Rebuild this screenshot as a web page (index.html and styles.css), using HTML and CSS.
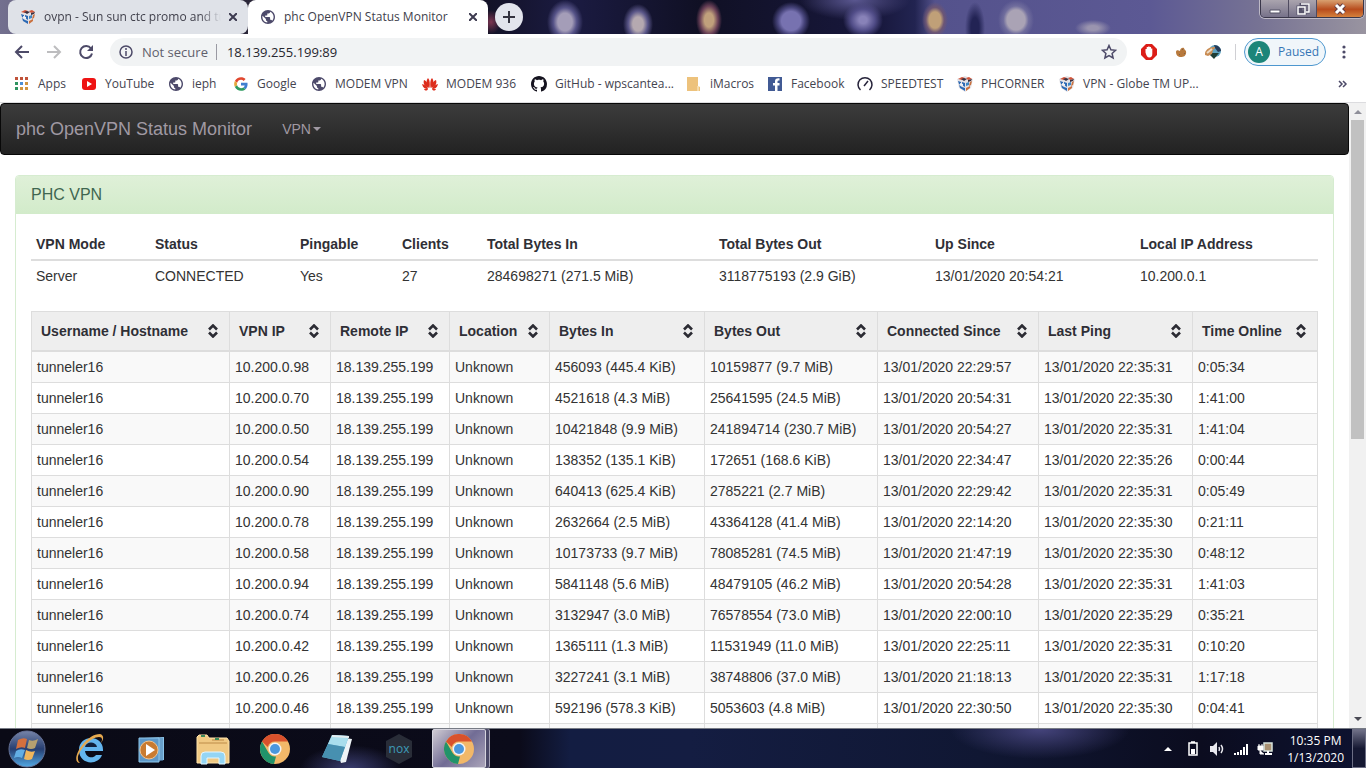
FILE: index.html
```html
<!DOCTYPE html>
<html lang="en">
<head>
<meta charset="utf-8">
<title>phc OpenVPN Status Monitor</title>
<link rel="stylesheet" href="styles.css">
</head>
<body>
<svg class="defs" aria-hidden="true">
  <symbol id="globe" viewBox="2 2 20 20"><path fill="#4d4a6b" d="M12 2C6.480 2 2 6.480 2 12s4.480 10 10 10 10-4.480 10-10S17.520 2 12 2zm-1 17.930c-3.950-.490-7-3.850-7-7.930 0-.620.080-1.210.210-1.790L9 15v1c0 1.100.900 2 2 2v1.930zm6.900-2.540c-.260-.810-1-1.390-1.900-1.390h-1v-3c0-.550-.450-1-1-1H8v-2h2c.550 0 1-.450 1-1V7h2c1.100 0 2-.900 2-2v-.410c2.930 1.190 5 4.060 5 7.410 0 2.080-.800 3.970-2.100 5.390z"/></symbol>
  <symbol id="cube" viewBox="0 0 16 16">
    <path fill="#e4e2e6" d="M8 0l8 3-2 9-6 4-6-4L0 3z"/>
    <path fill="#d4563a" d="M1 3l4-2 3 1-3 2zM9 2l3-1 3 2-4 1z"/><path fill="#3a3040" d="M4 3l3-1 3 1-3 2zM11 4l4-1-1 2-3 1z"/>
    <path fill="#2b69b4" d="M1 5l3 1v3L2 8zM5 6l3 1v4L5 9zM2 9l3 2 3 1v3l-5-3z"/>
    <path fill="#f0f1f5" d="M3 7l3 1v2L3 9z"/>
    <path fill="#3f86c4" d="M9 7l3-1v3l-3 1z"/><path fill="#c9713f" d="M13 6l2-1-1 4-2 1zM9 12l4-2v2l-4 3z"/>
  </symbol>
  <symbol id="cross" viewBox="0 0 8 8"><path d="M0 0l8 8M8 0L0 8" stroke="#3d3b50" stroke-width="2"/></symbol>
  <symbol id="chrome" viewBox="0 0 30 30">
    <circle cx="15" cy="15" r="15" fill="#f2b869"/>
    <path fill="#d9512c" d="M2 7.500A15 15 0 0 1 28 7.500H15a7.500 7.500 0 0 0-7.200 5.500z"/>
    <path fill="#21936a" d="M2 7.500l6.500 11.300A7.500 7.500 0 0 0 16 22.400L14 30A15 15 0 0 1 2 7.500z"/>
    <circle cx="15" cy="15" r="6.500" fill="#f3f3f3"/><circle cx="15" cy="15" r="5" fill="#4a97dd"/>
  </symbol>
  <symbol id="sort" viewBox="0 0 10 14"><path d="M1 5.500l4-4 4 4M1 8.500l4 4 4-4" fill="none" stroke="#2b2b33" stroke-width="2.600"/></symbol>
</svg>

<header class="browser">
  <div class="tabstrip">
    <div class="tab">
      <svg class="icon"><use href="#cube"/></svg>
      <button class="tab-title fade">ovpn - Sun sun ctc promo and tunneling</button>
      <button class="tab-close" aria-label="Close tab"><svg><use href="#cross"/></svg></button>
    </div>
    <div class="tab active">
      <svg class="icon small"><use href="#globe"/></svg>
      <button class="tab-title">phc OpenVPN Status Monitor</button>
      <button class="tab-close" aria-label="Close tab"><svg><use href="#cross"/></svg></button>
    </div>
    <button class="new-tab" aria-label="New tab"><svg viewBox="0 0 12 12"><path d="M6 0v12M0 6h12" stroke="#33323f" stroke-width="2"/></svg></button>
    <div class="window-controls">
      <button aria-label="Minimize"><svg viewBox="0 0 14 12"><path d="M2 7h10v3H2z" fill="#fff" stroke="#555267"/></svg></button>
      <button aria-label="Restore"><svg viewBox="0 0 14 12"><path d="M5 1h8v8H5zM2 4h7v7H2z" fill="none" stroke="#55526a" stroke-width="3"/><path d="M5 1h8v8h-3M2 4h7v7H2z" fill="none" stroke="#fff" stroke-width="1.500"/></svg></button>
      <button class="close" aria-label="Close"><svg viewBox="0 0 14 12"><path d="M3 2l8 8M11 2l-8 8" stroke="#5d3941" stroke-width="5"/><path d="M3 2l8 8M11 2l-8 8" stroke="#fff" stroke-width="3"/></svg></button>
    </div>
  </div>

  <div class="toolbar">
    <button class="nav-btn" aria-label="Back"><svg viewBox="0 0 16 16"><path d="M15 8H2M8 2L2 8l6 6" fill="none" stroke="#4d4a68" stroke-width="2"/></svg></button>
    <button class="nav-btn" aria-label="Forward"><svg viewBox="0 0 16 16"><path d="M1 8h13M8 2l6 6-6 6" fill="none" stroke="#bdbdbf" stroke-width="2"/></svg></button>
    <button class="nav-btn" aria-label="Reload"><svg viewBox="0 0 16 16"><path d="M13 4.500A6 6 0 1 0 14 9.500" fill="none" stroke="#4d4a68" stroke-width="2"/><path d="M15 1v6H9z" fill="#4d4a68"/></svg></button>
    <div class="omnibox">
      <svg class="info" viewBox="0 0 14 14"><circle cx="7" cy="7" r="6" fill="none" stroke="#4d4a68" stroke-width="1.500"/><path d="M7 6v5M7 3v2" stroke="#4d4a68" stroke-width="1.500"/></svg>
      <label class="insecure" for="url">Not secure</label>
      <input id="url" type="text" value="18.139.255.199:89">
      <button class="star" aria-label="Bookmark"><svg viewBox="0 0 16 16"><path d="M8 1.500l1.900 4.300 4.700.500-3.500 3.100 1 4.600L8 11.600 3.900 14l1-4.600L1.400 6.300l4.700-.500z" fill="none" stroke="#4d4a68" stroke-width="1.500"/></svg></button>
    </div>
    <div class="extensions">
      <button aria-label="Blocker"><svg class="icon" viewBox="0 0 16 16"><path d="M5 0h6l5 5v6l-5 5H5l-5-5V5z" fill="#dc1e18"/><path d="M4.500 8.500V5h1.200V3h1.400V2.500h1.500V3H10v1.500h1.300V10c0 2-1 3.500-3 3.500-2 0-2.800-1.500-3.800-5z" fill="#fff"/></svg></button>
      <button aria-label="Cookies"><svg class="icon" viewBox="0 0 16 16"><path d="M3 8c0-2 2-2 4-1 0-2 2-4 4-3 0 1 1 2 2 3 1 5-3 6-5 6-3 0-5-2-5-5z" fill="#b8793c"/><path d="M9 5l1 1M11 9l1 1M6 10l1 1" stroke="#7a604b"/></svg></button>
      <button aria-label="Downloader"><svg class="icon" viewBox="0 0 16 16"><circle cx="10" cy="7" r="6" fill="#5fa3c0"/><path d="M9 1c4 0 7 3 7 6l-3 1-3-4z" fill="#263b59"/><path d="M6 9h8l-5 6-4-4z" fill="#1f3d34"/><path d="M0 9c1-4 5-6 9-6 2 0 1 2-1 3l-1 4-4 2-3-1z" fill="#c98d55"/><path d="M2 9l5-4" stroke="#eddcc6" stroke-width="2"/></svg></button>
    </div>
    <button class="profile"><span class="avatar">A</span>Paused</button>
    <button class="menu" aria-label="Menu"><svg viewBox="0 0 4 14"><g fill="#4d4a68"><circle cx="2" cy="2" r="1.600"/><circle cx="2" cy="7" r="1.600"/><circle cx="2" cy="12" r="1.600"/></g></svg></button>
  </div>

  <nav class="bookmarks" aria-label="Bookmarks">
    <a href="#"><svg class="icon" viewBox="0 0 16 16"><path d="M1 1h3v3H1zM6 1h3v3H6zM11 1h3v3h-3z" fill="#c0533a"/><path d="M1 6h3v3H1zM1 11h3v3H1z" fill="#2f9360"/><path d="M6 6h3v3H6z" fill="#4a8fd6"/><path d="M11 6h3v3h-3zM6 11h3v3H6zM11 11h3v3h-3z" fill="#cf9440"/></svg>Apps</a>
    <a href="#"><svg class="icon" viewBox="0 0 16 16"><rect x="1" y="2" width="14" height="12" rx="3" fill="#ee1313"/><path d="M6 5l5 3-5 3z" fill="#fff"/></svg>YouTube</a>
    <a href="#"><svg class="icon small"><use href="#globe"/></svg>ieph</a>
    <a href="#"><svg class="icon" viewBox="-4 -4 56 56"><path fill="#e1482f" d="M24 9.500c3.540 0 6.710 1.220 9.210 3.600l6.850-6.850C35.900 2.380 30.470 0 24 0 14.620 0 6.510 5.380 2.560 13.220l7.980 6.190C12.430 13.720 17.740 9.500 24 9.500z"/><path fill="#3f7fd0" d="M46.980 24.550c0-1.570-.15-3.090-.38-4.550H24v9.020h12.940c-.58 2.960-2.260 5.480-4.780 7.180l7.730 6c4.510-4.180 7.090-10.360 7.090-17.650z"/><path fill="#e5a73d" d="M10.530 28.590A14.500 14.500 0 0 1 9.770 24c0-1.600.27-3.140.76-4.590l-7.980-6.190A23.900 23.900 0 0 0 0 24c0 3.880.92 7.540 2.560 10.780l7.970-6.190z"/><path fill="#2e9a60" d="M24 48c6.480 0 11.930-2.130 15.890-5.810l-7.730-6c-2.150 1.450-4.920 2.300-8.160 2.300-6.260 0-11.570-4.220-13.470-9.910l-7.980 6.190C6.510 42.620 14.620 48 24 48z"/></svg>Google</a>
    <a href="#"><svg class="icon small"><use href="#globe"/></svg>MODEM VPN</a>
    <a href="#"><svg class="icon" viewBox="0 0 16 16"><g fill="#dd2c1b"><path d="M7.500 12C4 9 4 4 6 2c2 2 2 6 1.500 10z"/><path d="M8.500 12C12 9 12 4 10 2c-2 2-2 6-1.500 10z"/><path d="M6.500 12C2 10 1 7 2 4c3 1 5 5 4.500 8z"/><path d="M9.500 12C14 10 15 7 14 4c-3 1-5 5-4.500 8z"/><path d="M6 13c-3 0-5-1-6-5 3 1 5 2 6 5zM10 13c3 0 5-1 6-5-3 1-5 2-6 5zM6 13H2c1 2 3 2 4 0zM10 13h4c-1 2-3 2-4 0z"/></g></svg>MODEM 936</a>
    <a href="#"><svg class="icon" viewBox="0 0 16 16"><path fill="#15131f" d="M8 0C3.580 0 0 3.580 0 8c0 3.540 2.290 6.530 5.470 7.590.4.070.55-.17.55-.38 0-.19-.01-.82-.01-1.490-2.010.37-2.530-.49-2.690-.94-.09-.23-.48-.94-.82-1.130-.28-.15-.68-.52-.01-.53.63-.01 1.080.58 1.230.82.72 1.210 1.870.87 2.330.66.07-.52.28-.87.51-1.070-1.780-.2-3.640-.89-3.640-3.950 0-.87.31-1.590.82-2.150-.08-.2-.36-1.020.08-2.120 0 0 .67-.21 2.200.82.64-.18 1.320-.27 2-.27s1.360.09 2 .27c1.530-1.040 2.200-.82 2.200-.82.44 1.100.16 1.920.08 2.120.51.56.82 1.270.82 2.150 0 3.070-1.870 3.750-3.650 3.950.29.25.54.73.54 1.480 0 1.070-.01 1.930-.01 2.200 0 .21.15.46.55.38A8.010 8.010 0 0 0 16 8c0-4.420-3.580-8-8-8z"/></svg>GitHub - wpscantea...</a>
    <a href="#"><svg class="icon" viewBox="0 0 16 16"><path d="M1 1h11v9l2 1v4H1z" fill="#edc27c"/><path d="M12 10v5" stroke="#fff3d6"/></svg>iMacros</a>
    <a href="#"><svg class="icon" viewBox="0 0 16 16"><rect x="1" y="1" width="14" height="14" fill="#415a94"/><path d="M10.500 15V9.500h2V7h-2V5.500c0-1 .5-1 2-1V2.300c-3-.3-4.500.7-4.500 3V7H6v2.500h2V15z" fill="#fff"/></svg>Facebook</a>
    <a href="#"><svg class="icon" viewBox="0 0 16 16"><path d="M3.500 14a7 7 0 1 1 9 0" fill="none" stroke="#26233a" stroke-width="1.500"/><path d="M7 10l4-5" stroke="#26233a" stroke-width="1.500"/></svg>SPEEDTEST</a>
    <a href="#"><svg class="icon"><use href="#cube"/></svg>PHCORNER</a>
    <a href="#"><svg class="icon"><use href="#cube"/></svg>VPN - Globe TM UP...</a>
    <button class="more" aria-label="More bookmarks"><svg viewBox="0 0 10 8"><path d="M1 1l3 3-3 3M5 1l3 3-3 3" fill="none" stroke="#4d4a68" stroke-width="1.500"/></svg></button>
  </nav>
</header>

<div class="viewport">
  <main class="page">
    <nav class="navbar">
      <a class="brand" href="#">phc OpenVPN Status Monitor</a>
      <button class="dropdown">VPN<span class="caret"></span></button>
    </nav>
    <section class="panel">
      <h3 class="panel-heading">PHC VPN</h3>
      <div class="panel-body">
        <table class="summary">
          <colgroup><col class="s-mode"><col class="s-status"><col class="s-ping"><col class="s-clients"><col class="s-in"><col class="s-out"><col class="s-since"><col class="s-local"></colgroup>
          <thead><tr><th>VPN Mode</th><th>Status</th><th>Pingable</th><th>Clients</th><th>Total Bytes In</th><th>Total Bytes Out</th><th>Up Since</th><th>Local IP Address</th></tr></thead>
          <tbody><tr><td>Server</td><td>CONNECTED</td><td>Yes</td><td>27</td><td>284698271 (271.5 MiB)</td><td>3118775193 (2.9 GiB)</td><td>13/01/2020 20:54:21</td><td>10.200.0.1</td></tr></tbody>
        </table>
        <table class="clients">
          <colgroup><col class="c-user"><col class="c-vpn"><col class="c-remote"><col class="c-loc"><col class="c-in"><col class="c-out"><col class="c-since"><col class="c-ping"><col class="c-online"></colgroup>
          <thead><tr>
            <th><button>Username / Hostname<svg><use href="#sort"/></svg></button></th>
            <th><button>VPN IP<svg><use href="#sort"/></svg></button></th>
            <th><button>Remote IP<svg><use href="#sort"/></svg></button></th>
            <th><button>Location<svg><use href="#sort"/></svg></button></th>
            <th><button>Bytes In<svg><use href="#sort"/></svg></button></th>
            <th><button>Bytes Out<svg><use href="#sort"/></svg></button></th>
            <th><button>Connected Since<svg><use href="#sort"/></svg></button></th>
            <th><button>Last Ping<svg><use href="#sort"/></svg></button></th>
            <th><button>Time Online<svg><use href="#sort"/></svg></button></th>
          </tr></thead>
          <tbody>
            <tr><td>tunneler16</td><td>10.200.0.98</td><td>18.139.255.199</td><td>Unknown</td><td>456093 (445.4 KiB)</td><td>10159877 (9.7 MiB)</td><td>13/01/2020 22:29:57</td><td>13/01/2020 22:35:31</td><td>0:05:34</td></tr>
            <tr><td>tunneler16</td><td>10.200.0.70</td><td>18.139.255.199</td><td>Unknown</td><td>4521618 (4.3 MiB)</td><td>25641595 (24.5 MiB)</td><td>13/01/2020 20:54:31</td><td>13/01/2020 22:35:30</td><td>1:41:00</td></tr>
            <tr><td>tunneler16</td><td>10.200.0.50</td><td>18.139.255.199</td><td>Unknown</td><td>10421848 (9.9 MiB)</td><td>241894714 (230.7 MiB)</td><td>13/01/2020 20:54:27</td><td>13/01/2020 22:35:31</td><td>1:41:04</td></tr>
            <tr><td>tunneler16</td><td>10.200.0.54</td><td>18.139.255.199</td><td>Unknown</td><td>138352 (135.1 KiB)</td><td>172651 (168.6 KiB)</td><td>13/01/2020 22:34:47</td><td>13/01/2020 22:35:26</td><td>0:00:44</td></tr>
            <tr><td>tunneler16</td><td>10.200.0.90</td><td>18.139.255.199</td><td>Unknown</td><td>640413 (625.4 KiB)</td><td>2785221 (2.7 MiB)</td><td>13/01/2020 22:29:42</td><td>13/01/2020 22:35:31</td><td>0:05:49</td></tr>
            <tr><td>tunneler16</td><td>10.200.0.78</td><td>18.139.255.199</td><td>Unknown</td><td>2632664 (2.5 MiB)</td><td>43364128 (41.4 MiB)</td><td>13/01/2020 22:14:20</td><td>13/01/2020 22:35:30</td><td>0:21:11</td></tr>
            <tr><td>tunneler16</td><td>10.200.0.58</td><td>18.139.255.199</td><td>Unknown</td><td>10173733 (9.7 MiB)</td><td>78085281 (74.5 MiB)</td><td>13/01/2020 21:47:19</td><td>13/01/2020 22:35:30</td><td>0:48:12</td></tr>
            <tr><td>tunneler16</td><td>10.200.0.94</td><td>18.139.255.199</td><td>Unknown</td><td>5841148 (5.6 MiB)</td><td>48479105 (46.2 MiB)</td><td>13/01/2020 20:54:28</td><td>13/01/2020 22:35:31</td><td>1:41:03</td></tr>
            <tr><td>tunneler16</td><td>10.200.0.74</td><td>18.139.255.199</td><td>Unknown</td><td>3132947 (3.0 MiB)</td><td>76578554 (73.0 MiB)</td><td>13/01/2020 22:00:10</td><td>13/01/2020 22:35:29</td><td>0:35:21</td></tr>
            <tr><td>tunneler16</td><td>10.200.0.42</td><td>18.139.255.199</td><td>Unknown</td><td>1365111 (1.3 MiB)</td><td>11531949 (11.0 MiB)</td><td>13/01/2020 22:25:11</td><td>13/01/2020 22:35:31</td><td>0:10:20</td></tr>
            <tr><td>tunneler16</td><td>10.200.0.26</td><td>18.139.255.199</td><td>Unknown</td><td>3227241 (3.1 MiB)</td><td>38748806 (37.0 MiB)</td><td>13/01/2020 21:18:13</td><td>13/01/2020 22:35:31</td><td>1:17:18</td></tr>
            <tr><td>tunneler16</td><td>10.200.0.46</td><td>18.139.255.199</td><td>Unknown</td><td>592196 (578.3 KiB)</td><td>5053603 (4.8 MiB)</td><td>13/01/2020 22:30:50</td><td>13/01/2020 22:35:30</td><td>0:04:41</td></tr>
            <tr><td>&nbsp;</td><td></td><td></td><td></td><td></td><td></td><td></td><td></td><td></td></tr>
          </tbody>
        </table>
      </div>
    </section>
  </main>
  <div class="scrollbar" aria-hidden="true">
    <svg viewBox="0 0 8 4"><path d="M0 4l4-4 4 4z" fill="#8f8f99"/></svg>
    <div class="track"><div class="thumb"></div></div>
    <svg viewBox="0 0 8 4"><path d="M0 0l4 4 4-4z" fill="#4a4a55"/></svg>
  </div>
</div>

<footer class="taskbar">
  <div class="apps">
    <button aria-label="Start"><svg class="orb" viewBox="0 0 38 38"><defs><linearGradient id="o" x2="0" y2="1"><stop offset="0" stop-color="#7684a8"/><stop offset=".5" stop-color="#263e71"/><stop offset="1" stop-color="#51a9e4"/></linearGradient></defs><circle cx="19" cy="19" r="18" fill="url(#o)" stroke="#667297"/><path d="M10 10q5-3 9-1l-2 9q-4-2-9 1z" fill="#d3703e"/><path d="M21 10q4 2 9-1l-3 9q-4 2-8 0z" fill="#b5a070"/><path d="M8 21q4-3 9-1l-3 8q-4-2-8 0z" fill="#62aee4"/><path d="M18 20q5 3 9 1l-3 8q-4 2-8 0z" fill="#f0b65c"/></svg></button>
    <button aria-label="Internet Explorer"><svg viewBox="0 0 34 34"><path d="M31 19H13c1 7 8 8 11 4h6C26 34 7 33 7 18 7 2 32 2 31 19z" fill="#63b5ee"/><path d="M13 15h12c-1-6-11-6-12 0z" fill="#10203c"/><path d="M8 31C-3 31 12 2 28 2c4 1 4 5 1 9 2-4 1-6-2-6C17 5 0 25 8 31z" fill="#e6a94f"/></svg></button>
    <button aria-label="Media Player"><svg viewBox="0 0 34 34"><path d="M10 6l20-1v23l-20 2z" fill="#8cc4ea"/><path d="M26 6v23M28 6v23" stroke="#467cab"/><path d="M5 6h20v24H5z" fill="#5d98c9" stroke="#8fc8ed"/><circle cx="15" cy="18" r="9" fill="#c97b31" stroke="#f2c38d"/><path d="M12 12l9 6-9 6z" fill="#fff"/></svg></button>
    <button aria-label="Explorer"><svg viewBox="0 0 34 34"><path d="M1 5l2-2h8l2 3h18l2 3v22H1z" fill="#f0c983" stroke="#ffe3ab"/><path d="M3 11h28M16 8h12" stroke="#bd8c49"/><path d="M5 4h4M19 7h4" stroke="#3b895a" stroke-width="2"/><path d="M5 32v-8q0-4 4-4h16q4 0 4 4v8h-6v-6H11v6z" fill="#94d5f4" stroke="#e2f6ff"/></svg></button>
    <button aria-label="Chrome"><svg class="chrome"><use href="#chrome"/></svg></button>
    <button aria-label="Notepad"><svg viewBox="0 0 34 34"><path d="M12 4l20 3-6 23-5 1z" fill="#eef4f7"/><path d="M12 3l17 1-9 25-18-4z" fill="#67b3d2"/><path d="M12 3l17 1-4 11L8 12z" fill="#a9deed"/><path d="M8 12l17 3-5 14-18-4z" fill="#4790b0"/><path d="M12 4l17 1" stroke="#e3edf0" stroke-width="2"/></svg></button>
    <button aria-label="Nox"><svg viewBox="0 0 34 34"><path d="M17 2l13 7v16l-13 7-13-7V9z" fill="#292d38"/><text x="17" y="21" text-anchor="middle" class="nox">nox</text></svg></button>
    <button class="running" aria-label="Chrome, running"><svg class="chrome"><use href="#chrome"/></svg></button>
  </div>
  <div class="tray">
    <svg class="up" viewBox="0 0 8 4"><path d="M0 4l4-4 4 4z" fill="#fff"/></svg>
    <svg viewBox="0 0 16 16"><path d="M4 2h8v12H4zM6 1h4" fill="none" stroke="#fff" stroke-width="1.500"/><path d="M6 8h4v5H6z" fill="#fff"/></svg>
    <svg viewBox="0 0 16 16"><path d="M1 5h3l4-4v14l-4-4H1z" fill="#e8e8ee"/><path d="M10 6q1 2 0 4M12 4q3 4 0 8" fill="none" stroke="#e8e8ee" stroke-width="1.500"/></svg>
    <svg viewBox="0 0 16 16"><path d="M1 12h2v2H1zM4 11h2v3H4zM7 9h2v5H7zM10 6h2v8h-2zM13 3h2v11h-2z" fill="#fff"/></svg>
    <svg viewBox="0 0 16 16"><path d="M7 2h8v8H7z" fill="#a99173" stroke="#d8e4dd" stroke-width="1.500"/><path d="M8 13h7M11 10v3" stroke="#fff" stroke-width="2"/><path d="M1 5h5v4H1zM3 9v4h4M2 3v2M5 3v2" fill="#fff" stroke="#fff"/></svg>
    <div class="clock"><time>10:35 PM</time><time>1/13/2020</time></div>
    <button class="show-desktop" aria-label="Show desktop"></button>
  </div>
</footer>
</body>
</html>
```
FILE: styles.css
```css
* { box-sizing: border-box; }
body {
  margin: 0; height: 100vh; overflow: hidden;
  display: flex; flex-direction: column;
  font: 12px/16px "Open Sans", "Noto Sans", sans-serif;
  color: #333; background: #fff;
}
button, input { font: inherit; color: inherit; border: 0; padding: 0; background: none; }
button svg { display: block; }
a { color: inherit; text-decoration: none; }
.defs { position: absolute; width: 0; height: 0; }
.icon { width: 16px; height: 16px; flex: none; }
.icon.small { padding: 1px; }

/* tab strip */
.tabstrip {
  height: 34px; display: flex; align-items: flex-start; padding-left: 8px;
  background:
    radial-gradient(ellipse 18px 22px at 565px 22px, #a49db8 0 40%, #555287 65%, transparent),
    radial-gradient(ellipse 15px 20px at 638px 24px, #b5a9b0 0 35%, #5a5688 65%, transparent),
    radial-gradient(ellipse 13px 20px at 709px 20px, #c0a07c 0 35%, #683f56 70%, transparent),
    radial-gradient(ellipse 19px 19px at 791px 21px, #7772b0 0 50%, #48457c 70%, transparent),
    radial-gradient(ellipse 20px 18px at 863px 20px, #8882b8 0 20%, #514d88 60%, transparent),
    radial-gradient(ellipse 13px 18px at 935px 20px, #c0a078 0 45%, #6d5674 70%, transparent),
    radial-gradient(ellipse 18px 20px at 1016px 20px, #aaa3b5 0 50%, #706d9d 70%, transparent),
    radial-gradient(ellipse 18px 8px at 1093px 28px, #9a94af 0 30%, transparent),
    radial-gradient(ellipse 10px 26px at 975px 28px, #222354 0 40%, transparent),
    radial-gradient(ellipse 55px 20px at 855px 0, #5a5790, transparent),
    radial-gradient(ellipse 10px 12px at 491px 22px, #7c3550, transparent),
    linear-gradient(90deg, #73708f 0, #2a2638 248px, #121124 480px, #1b1b42 570px, #101024 700px, #18183d 880px, #222451 915px, #54528c 935px, #5c5994 1150px, #777394 1260px, #9994a0);
}
.tab {
  flex: 0 0 240px; min-width: 0; height: 34px; display: flex; align-items: center; gap: 8px;
  padding: 0 11px 0 12px; border-radius: 8px; background: #dfe2e8;
}
.tab.active { background: #fff; border-radius: 8px 8px 0 0; }
.tab-title { flex: 1; min-width: 0; overflow: hidden; white-space: nowrap; text-align: left; color: #41414c; }
.fade { mask-image: linear-gradient(90deg, #000 88%, transparent); }
.tab-close { flex: none; width: 8px; height: 8px; }
.tab-close svg { width: 8px; height: 8px; }
.new-tab { flex: none; width: 28px; height: 28px; margin: 3px 0 0 7px; border-radius: 50%; background: #e2e4ec; display: grid; place-items: center; }
.new-tab svg { width: 12px; height: 12px; }
.window-controls { display: flex; margin: 0 2px 0 auto; height: 18px; border: 1px solid #3a374a; border-top: 0; border-radius: 0 0 5px 5px; overflow: hidden; box-shadow: 0 0 0 1px #bdb9c6; }
.window-controls button { width: 28px; display: grid; place-items: center; background: linear-gradient(#aaa4ae, #77728a); border-right: 1px solid #4f4b60; }
.window-controls .close { width: 46px; border: 0; background: linear-gradient(#d8a070, #b84c1d 55%, #d5813c); }
.window-controls svg { width: 14px; height: 12px; }

/* toolbar */
.toolbar { height: 36px; display: flex; align-items: center; padding: 0 20px 0 14px; font-size: 13px; }
.nav-btn { width: 16px; height: 16px; margin-right: 16px; }
.nav-btn svg { width: 16px; height: 16px; }
.omnibox { flex: 1; height: 28px; display: flex; align-items: center; padding: 0 10px 0 9px; margin-right: 14px; border-radius: 14px; background: #f1f3f4; }
.info { width: 14px; height: 14px; margin-right: 9px; }
.insecure { color: #60606c; padding-right: 8px; border-right: 1px solid #9a9aa3; }
.omnibox input { flex: 1; margin-left: 10px; min-width: 0; outline: 0; color: #26262e; }
.star svg { width: 16px; height: 16px; }
.extensions { display: flex; gap: 16px; padding-right: 14px; margin-right: 8px; border-right: 1px solid #d0d0d4; }
.profile { height: 28px; width: 82px; display: flex; align-items: center; gap: 8px; padding: 0 3px; border: 1px solid #4d97cf; border-radius: 14px; background: #f0f6fa; color: #3575b5; font-size: 12px; }
.avatar { width: 22px; height: 22px; line-height: 22px; border-radius: 50%; background: #1c8579; color: #fff; text-align: center; flex: none; }
.menu { margin-left: 16px; }
.menu svg { width: 4px; height: 14px; }

/* bookmarks */
.bookmarks {
  height: 32px; display: grid; align-items: center; padding: 0 18px 4px 14px;
  grid-template-columns: 67px 87px 65px 78px 111px 109px 155px 81px 90px 100px 102px 1fr auto;
}
.bookmarks a { display: flex; align-items: center; gap: 8px; white-space: nowrap; color: #44444f; }
.more svg { width: 10px; height: 8px; }

/* page */
.viewport { flex: 1; min-height: 0; display: flex; border-top: 1px solid #dcdcdf; font: 14px/20px "Liberation Sans", Arial, sans-serif; }
.page { flex: 1; min-width: 0; overflow: hidden; }
.navbar { display: flex; align-items: center; min-height: 52px; padding: 0 15px; margin-bottom: 20px; border: 1px solid #080808; border-radius: 4px; background: linear-gradient(#3c3c3c, #222); color: #a099a3; }
.brand { font-size: 18px; margin-right: 30px; }
.dropdown { display: flex; align-items: center; gap: 2px; }
.caret { border: 4px solid transparent; border-top-color: currentColor; border-bottom: 0; }
.panel { margin: 0 15px; border: 1px solid #d6ecd0; border-radius: 4px; }
.panel-heading { margin: 0; padding: 10px 15px; font-weight: 400; font-size: 16px; line-height: 18px; color: #3f6650; background: linear-gradient(#dff0d8, #d2ebca); border-radius: 3px 3px 0 0; }
.panel-body { padding: 15px; }
table { width: 100%; table-layout: fixed; border-collapse: collapse; margin-bottom: 20px; text-align: left; white-space: nowrap; }
th, td { padding: 5px; }
th { color: #2f2f36; }
.summary th { border-bottom: 2px solid #ddd; }
.clients th, .clients td { border: 1px solid #ddd; }
.clients th { padding: 0; background: #eee; border-bottom-width: 2px; }
.clients th button { width: 100%; display: flex; align-items: center; justify-content: space-between; padding: 9px 11px 9px 9px; font-weight: 700; }
.clients th svg { width: 10px; height: 14px; }
.clients tbody tr:nth-child(odd) { background: #f9f9f9; }
.s-mode { width: 119px; } .s-status { width: 145px; } .s-ping { width: 102px; } .s-clients { width: 85px; }
.s-in { width: 232px; } .s-out { width: 216px; } .s-since { width: 205px; } .s-local { width: 183px; }
.c-user { width: 198px; } .c-vpn { width: 101px; } .c-remote { width: 119px; } .c-loc { width: 100px; }
.c-in { width: 155px; } .c-out { width: 173px; } .c-since { width: 161px; } .c-ping { width: 154px; } .c-online { width: 125px; }
.scrollbar { width: 17px; display: flex; flex-direction: column; align-items: center; gap: 6px; padding: 7px 0; background: #f1f1f1; }
.scrollbar svg { width: 8px; height: 4px; }
.track { flex: 1; width: 13px; }
.thumb { height: 54%; background: #c1c1c1; }

/* taskbar */
.taskbar {
  height: 40px; display: flex; justify-content: space-between; color: #fff; border-top: 1px solid #777b85;
  background:
    radial-gradient(ellipse 90px 30px at 1040px 0, #45447c, transparent),
    radial-gradient(ellipse 50px 24px at 350px 40px, #3a3d70, transparent),
    linear-gradient(90deg, #0a0a16 0, #0b0b1a 520px, #131d42 570px, #141d42 690px, #101733 980px, #0b0c1f 1200px, #0d1230);
}
.apps { display: flex; align-items: center; }
.apps button { width: 62px; height: 100%; display: grid; place-items: center; }
.apps button:first-child { width: 58px; padding-right: 4px; }
.apps svg { width: 34px; height: 34px; }
.apps .orb { width: 38px; height: 38px; }
.apps .chrome { width: 30px; height: 30px; }
.apps .running { width: 54px; border: 1px solid #d6d5df; border-radius: 2px; background: linear-gradient(135deg, #d0ccd3, #716c95 50%, #aaa4b9); box-shadow: 3px 0 0 #4a4868, 4px 0 0 #a3a1b5; margin-left: 2px; }
.nox { font: 12px "Open Sans", sans-serif; fill: #3d9bb9; }
.tray { display: flex; align-items: center; gap: 8px; }
.tray svg { width: 16px; height: 16px; }
.tray .up { width: 8px; height: 4px; margin-right: 5px; }
.clock { display: flex; flex-direction: column; align-items: center; line-height: 17px; margin-left: 6px; }
.show-desktop { width: 14px; height: 100%; border: 1px solid #6c6e84; background: linear-gradient(#6f7087, #151832 50%); }
```
